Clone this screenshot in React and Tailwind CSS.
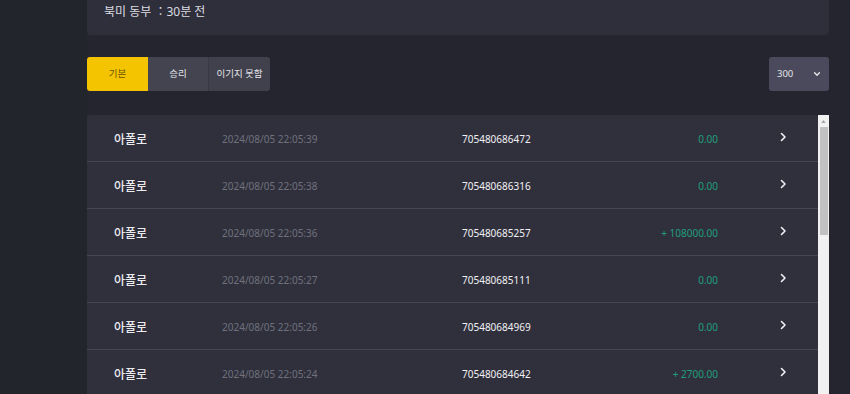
import React from "react";

const rows = [
  { name: "아폴로", date: "2024/08/05 22:05:39", id: "705480686472", amount: "0.00" },
  { name: "아폴로", date: "2024/08/05 22:05:38", id: "705480686316", amount: "0.00" },
  { name: "아폴로", date: "2024/08/05 22:05:36", id: "705480685257", amount: "+ 108000.00" },
  { name: "아폴로", date: "2024/08/05 22:05:27", id: "705480685111", amount: "0.00" },
  { name: "아폴로", date: "2024/08/05 22:05:26", id: "705480684969", amount: "0.00" },
  { name: "아폴로", date: "2024/08/05 22:05:24", id: "705480684642", amount: "+ 2700.00" },
];

function Chevron({ className }) {
  return (
    <svg viewBox="0 0 10 10" className={className} fill="none" stroke="currentColor" strokeWidth="1.6" strokeLinecap="round" strokeLinejoin="round">
      <path d="M3.5 1.5 L7 5 L3.5 8.5" />
    </svg>
  );
}

export default function App() {
  return (
    <div
      className="w-[850px] h-[394px] overflow-hidden flex bg-[#25252f] text-white"
      style={{ fontFamily: '"Noto Sans", "Noto Sans CJK KR", sans-serif' }}
    >
      <div className="w-[87px] h-full bg-[#22252c] shrink-0"></div>
      <div className="w-[742px] flex flex-col">
        {/* server status */}
        <div className="h-[35px] shrink-0 bg-[#2f2f3b] rounded-b-[4px] pl-[17px] pt-[3px] text-[12px] text-[#dcdce2]">
          북미 동부 ：30분 전
        </div>

        {/* filters */}
        <div className="mt-[22px] h-[34px] shrink-0 flex justify-between">
          <div className="flex rounded-[3px] overflow-hidden text-[9.5px]">
            <button className="w-[61px] bg-[#f5c400] text-[#6b5500] flex items-center justify-center">기본</button>
            <button className="w-[61px] bg-[#434450] text-[#e4e4ea] flex items-center justify-center border-r border-[#383944]">승리</button>
            <button className="w-[61px] bg-[#40414d] text-[#e4e4ea] flex items-center justify-center">이기지 못함</button>
          </div>
          <div className="w-[60px] bg-[#4a4a5c] rounded-[3px] flex items-center justify-between pl-[8px] pr-[8px] text-[9.5px] text-[#e4e4ea]">
            <span>300</span>
            <svg viewBox="0 0 10 10" className="w-[8px] h-[8px]" fill="none" stroke="currentColor" strokeWidth="1.8" strokeLinecap="round" strokeLinejoin="round">
              <path d="M2 3.5 L5 6.5 L8 3.5" />
            </svg>
          </div>
        </div>

        {/* list */}
        <div className="mt-[24px] flex flex-1 min-h-0">
          <div className="w-[731px] bg-[#30303c] rounded-t-[3px] flex flex-col">
            {rows.map((r, i) => (
              <div
                key={i}
                className="h-[47px] shrink-0 flex items-center border-b border-[#464654] pl-[27px] pt-[2px]"
              >
                <div
                  className="w-[108px] text-[12px] font-medium text-[#ececf0]"
                  style={{ fontFamily: '"Noto Sans CJK KR", sans-serif' }}
                >
                  {r.name}
                </div>
                <div className="w-[240px] text-[10px] text-[#6f707c]">{r.date}</div>
                <div className="w-[130px] text-[10px] text-[#f0f0f4]">{r.id}</div>
                <div className="w-[126px] text-right text-[10px] text-[#1f9e7c]">{r.amount}</div>
                <div className="ml-[60px] text-[#f0f0f4] -mt-[4px]">
                  <Chevron className="w-[10px] h-[10px]" />
                </div>
              </div>
            ))}
          </div>
          <div className="w-[11px] bg-[#f1f1f1] flex flex-col items-center">
            <div className="h-[12px] flex items-center justify-center">
              <svg viewBox="0 0 6 4" className="w-[5px] h-[3px]">
                <path d="M0 4 L3 0 L6 4 Z" fill="#a3a3a3" />
              </svg>
            </div>
            <div className="w-[8px] h-[108px] bg-[#c1c1c1]"></div>
          </div>
        </div>
      </div>
      <div className="flex-1 bg-[#25252f]"></div>
    </div>
  );
}
